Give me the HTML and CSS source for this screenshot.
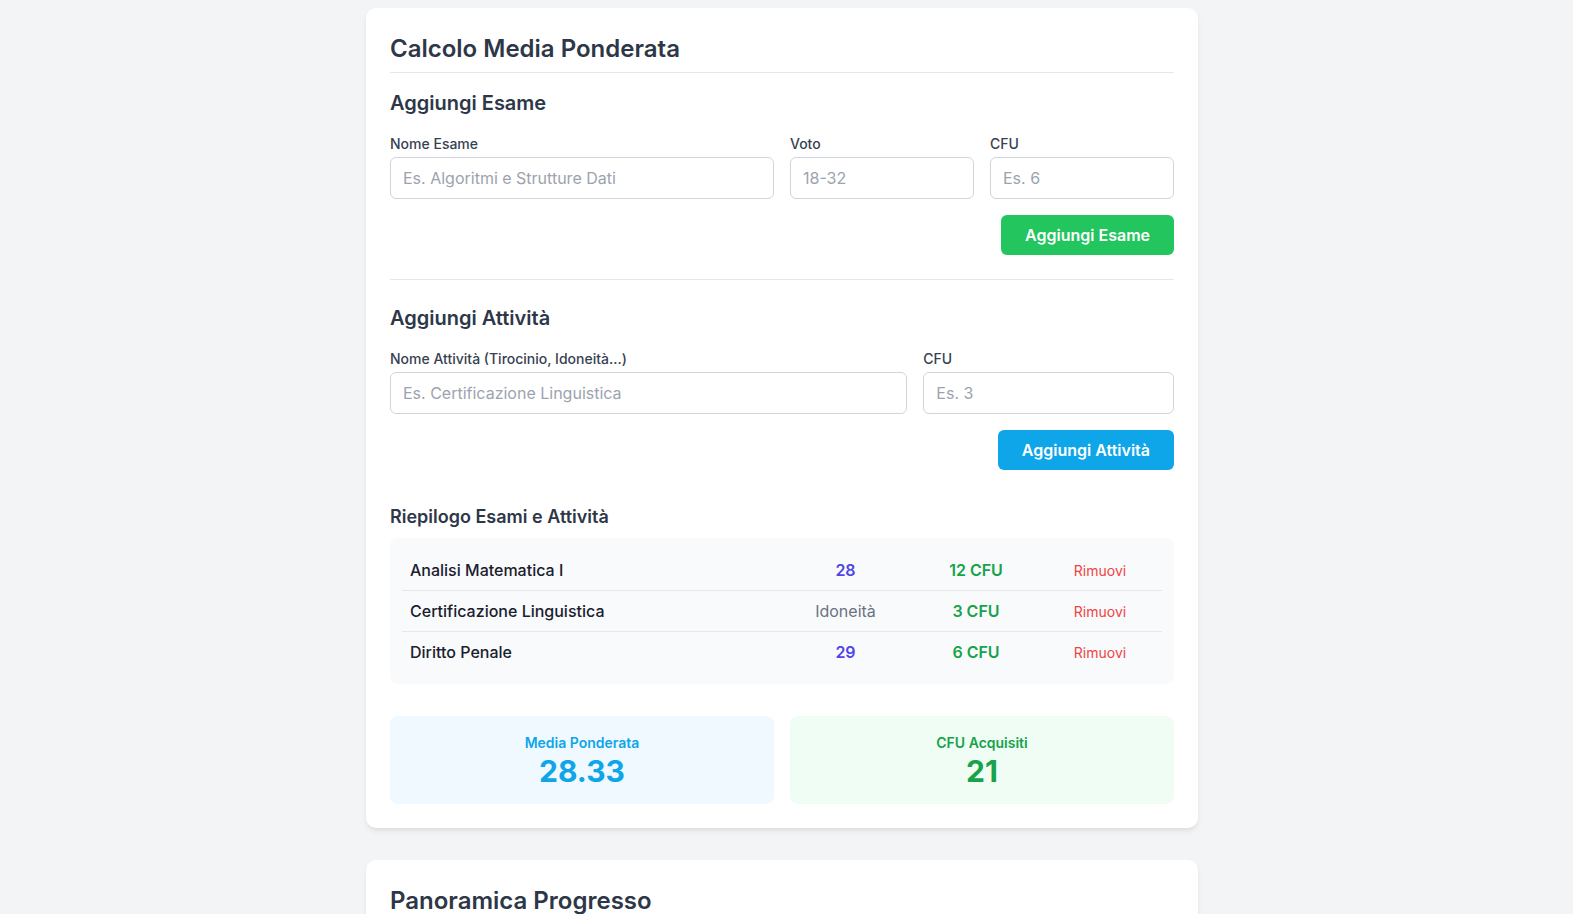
FILE: index.html
```html
<!DOCTYPE html>
<html lang="it">
<head>
<meta charset="utf-8">
<title>Calcolo Media Ponderata</title>
<link rel="stylesheet" href="styles.css">
</head>
<body>
<main class="page">
  <section class="card">
    <h1 class="card-title">Calcolo Media Ponderata</h1>

    <div class="section section-exam">
      <h2 class="section-title">Aggiungi Esame</h2>
      <div class="form-grid grid-exam">
        <div class="field span-2">
          <label class="label">Nome Esame</label>
          <input class="input" type="text" placeholder="Es. Algoritmi e Strutture Dati">
        </div>
        <div class="field">
          <label class="label">Voto</label>
          <input class="input" type="text" placeholder="18-32">
        </div>
        <div class="field">
          <label class="label">CFU</label>
          <input class="input" type="text" placeholder="Es. 6">
        </div>
      </div>
      <div class="actions">
        <button class="btn btn-green">Aggiungi Esame</button>
      </div>
    </div>

    <div class="section section-activity">
      <h2 class="section-title">Aggiungi Attività</h2>
      <div class="form-grid grid-activity">
        <div class="field span-2">
          <label class="label">Nome Attività (Tirocinio, Idoneità...)</label>
          <input class="input" type="text" placeholder="Es. Certificazione Linguistica">
        </div>
        <div class="field">
          <label class="label">CFU</label>
          <input class="input" type="text" placeholder="Es. 3">
        </div>
      </div>
      <div class="actions">
        <button class="btn btn-sky">Aggiungi Attività</button>
      </div>
    </div>

    <h3 class="summary-title">Riepilogo Esami e Attività</h3>
    <div class="list">
      <div class="row">
        <span class="row-name">Analisi Matematica I</span>
        <span class="row-grade">28</span>
        <span class="row-cfu">12 CFU</span>
        <span class="row-action"><button class="link-remove">Rimuovi</button></span>
      </div>
      <div class="row">
        <span class="row-name">Certificazione Linguistica</span>
        <span class="row-grade row-grade-muted">Idoneità</span>
        <span class="row-cfu">3 CFU</span>
        <span class="row-action"><button class="link-remove">Rimuovi</button></span>
      </div>
      <div class="row">
        <span class="row-name">Diritto Penale</span>
        <span class="row-grade">29</span>
        <span class="row-cfu">6 CFU</span>
        <span class="row-action"><button class="link-remove">Rimuovi</button></span>
      </div>
    </div>

    <div class="stats">
      <div class="stat stat-sky">
        <div class="stat-label">Media Ponderata</div>
        <div class="stat-value">28.33</div>
      </div>
      <div class="stat stat-green">
        <div class="stat-label">CFU Acquisiti</div>
        <div class="stat-value">21</div>
      </div>
    </div>
  </section>

  <section class="card">
    <h1 class="card-title">Panoramica Progresso</h1>
  </section>
</main>
</body>
</html>
```

FILE: styles.css
```css
* { box-sizing: border-box; }

html, body {
  margin: 0;
  padding: 0;
  background: #f3f4f6;
  font-family: Inter, "Noto Sans", "Liberation Sans", sans-serif;
  color: #1f2937;
}

body {
  padding-right: 9px;
  overflow: hidden;
  height: 914px;
}

.page {
  width: 832px;
  margin: 0 auto;
  padding-top: 8px;
  display: flex;
  flex-direction: column;
  gap: 32px;
}

.card {
  background: #ffffff;
  border-radius: 10px;
  box-shadow: 0 4px 6px -1px rgba(0,0,0,0.08), 0 2px 4px -2px rgba(0,0,0,0.06);
  padding: 24px;
}

.card-title {
  margin: 0 0 16px 0;
  font-size: 24px;
  line-height: 32px;
  font-weight: 600;
  color: #2d3748;
  padding-top: 1px;
  padding-bottom: 7px;
  border-bottom: 1px solid #e5e7eb;
}

.section-title {
  margin: 0 0 16px 0;
  padding-top: 1px;
  height: 28px;
  font-size: 20px;
  line-height: 27px;
  font-weight: 600;
  color: #2d3748;
}

.section-exam {
  padding-bottom: 24px;
  border-bottom: 1px solid #e5e7eb;
}

.section-activity {
  padding-top: 24px;
}

.form-grid {
  display: grid;
  gap: 16px;
}

.grid-exam { grid-template-columns: repeat(4, minmax(0, 1fr)); }
.grid-activity { grid-template-columns: repeat(3, minmax(0, 1fr)); }

.span-2 { grid-column: span 2; }

.field {
  display: flex;
  flex-direction: column;
  min-width: 0;
}

.label {
  font-size: 14px;
  line-height: 20px;
  font-weight: 500;
  color: #374151;
  padding-top: 1px;
  margin-bottom: 3px;
}

.input {
  width: 100%;
  min-width: 0;
  height: 42px;
  border: 1px solid #d1d5db;
  border-radius: 6px;
  padding: 8px 12px;
  font-family: inherit;
  font-size: 16px;
  line-height: 24px;
  color: #111827;
  background: #fff;
  outline: none;
}

.input::placeholder { color: #9ca3af; }

.actions {
  display: flex;
  justify-content: flex-end;
  margin-top: 16px;
}

.btn {
  border: 0;
  border-radius: 6px;
  padding: 8px 24px;
  height: 40px;
  font-family: inherit;
  font-size: 16px;
  line-height: 24px;
  font-weight: 600;
  color: #ffffff;
  cursor: pointer;
}

.btn-green { background: #22c55e; }
.btn-sky { background: #0ea5e9; }

.summary-title {
  margin: 33px 0 7px 0;
  font-size: 18px;
  line-height: 28px;
  font-weight: 600;
  color: #2d3748;
}

.list {
  background: #f8fafc;
  border-radius: 8px;
  padding: 12px;
}

.row {
  display: grid;
  grid-template-columns: 1fr 121px 140px 108px;
  align-items: center;
  padding: 8px;
  border-bottom: 1px solid #e5e7eb;
}

.row:last-child { border-bottom: 0; }

.row-name {
  font-size: 16px;
  line-height: 24px;
  font-weight: 500;
  color: #1a202c;
}

.row-grade {
  text-align: center;
  font-size: 16px;
  line-height: 24px;
  font-weight: 600;
  color: #4f46e5;
}

.row-grade-muted {
  font-weight: 400;
  color: #6b7280;
}

.row-cfu {
  text-align: center;
  font-size: 16px;
  line-height: 24px;
  font-weight: 600;
  color: #16a34a;
}

.row-action { text-align: center; }

.link-remove {
  background: none;
  border: 0;
  padding: 0;
  font-family: inherit;
  font-size: 14px;
  line-height: 20px;
  color: #ef4444;
  cursor: pointer;
}

.stats {
  margin-top: 32px;
  display: grid;
  grid-template-columns: 1fr 1fr;
  gap: 16px;
}

.stat {
  border-radius: 8px;
  padding: 17px 16px 15px;
  text-align: center;
}

.stat-label {
  font-size: 14px;
  line-height: 20px;
  font-weight: 600;
}

.stat-value {
  font-size: 30px;
  line-height: 36px;
  font-weight: 700;
}

.stat-sky { background: #f0f9ff; }
.stat-sky .stat-label { color: #0ea5e9; }
.stat-sky .stat-value { color: #0ea5e9; }

.stat-green { background: #f0fdf4; }
.stat-green .stat-label { color: #16a34a; }
.stat-green .stat-value { color: #16a34a; }
```
